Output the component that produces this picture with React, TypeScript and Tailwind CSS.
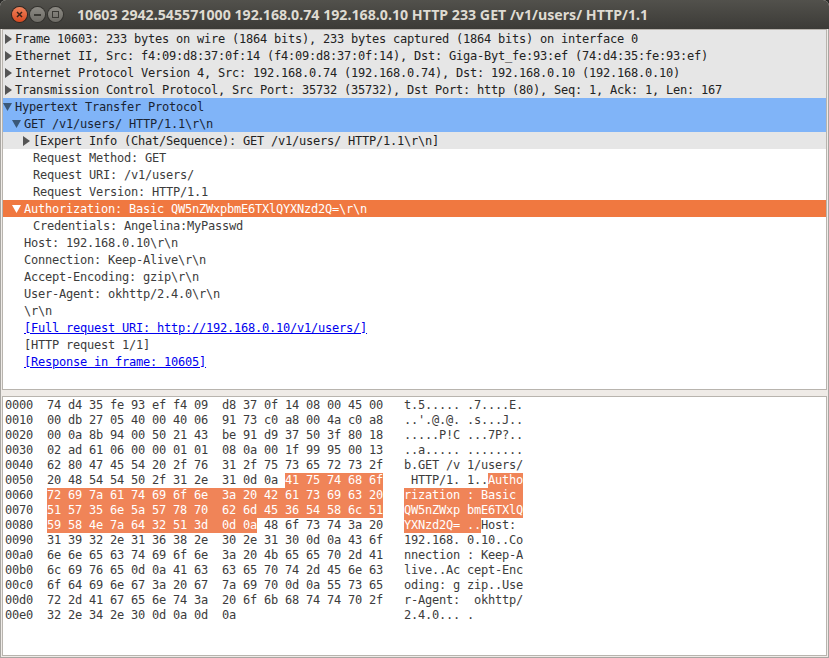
const hexRows: [string, string, string, string, string][] = [
  ["0000", "74 d4 35 fe 93 ef f4 09", "d8 37 0f 14 08 00 45 00", "t.5.....", ".7....E."],
  ["0010", "00 db 27 05 40 00 40 06", "91 73 c0 a8 00 4a c0 a8", "..'.@.@.", ".s...J.."],
  ["0020", "00 0a 8b 94 00 50 21 43", "be 91 d9 37 50 3f 80 18", ".....P!C", "...7P?.."],
  ["0030", "02 ad 61 06 00 00 01 01", "08 0a 00 1f 99 95 00 13", "..a.....", "........"],
  ["0040", "62 80 47 45 54 20 2f 76", "31 2f 75 73 65 72 73 2f", "b.GET /v", "1/users/"],
  ["0050", "20 48 54 54 50 2f 31 2e", "31 0d 0a 41 75 74 68 6f", " HTTP/1.", "1..Autho"],
  ["0060", "72 69 7a 61 74 69 6f 6e", "3a 20 42 61 73 69 63 20", "rization", ": Basic "],
  ["0070", "51 57 35 6e 5a 57 78 70", "62 6d 45 36 54 58 6c 51", "QW5nZWxp", "bmE6TXlQ"],
  ["0080", "59 58 4e 7a 64 32 51 3d", "0d 0a 48 6f 73 74 3a 20", "YXNzd2Q=", "..Host: "],
  ["0090", "31 39 32 2e 31 36 38 2e", "30 2e 31 30 0d 0a 43 6f", "192.168.", "0.10..Co"],
  ["00a0", "6e 6e 65 63 74 69 6f 6e", "3a 20 4b 65 65 70 2d 41", "nnection", ": Keep-A"],
  ["00b0", "6c 69 76 65 0d 0a 41 63", "63 65 70 74 2d 45 6e 63", "live..Ac", "cept-Enc"],
  ["00c0", "6f 64 69 6e 67 3a 20 67", "7a 69 70 0d 0a 55 73 65", "oding: g", "zip..Use"],
  ["00d0", "72 2d 41 67 65 6e 74 3a", "20 6f 6b 68 74 74 70 2f", "r-Agent:", " okhttp/"],
  ["00e0", "32 2e 34 2e 30 0d 0a 0d", "0a", "2.4.0...", "."],
];

const selected: Record<string, [number, number, number, number]> = {
  "0050": [34, 48, 12, 17],
  "0060": [0, 48, 0, 17],
  "0070": [0, 48, 0, 17],
  "0080": [0, 30, 0, 11],
};

function Hl({ text, from, to }: { text: string; from: number; to: number }) {
  return (
    <>
      {text.slice(0, from)}
      <span className="inline-block h-[15px] align-top bg-[#f08458] text-white">{text.slice(from, to)}</span>
      {text.slice(to)}
    </>
  );
}

function Arrow({ open, x, color }: { open: boolean; x: number; color: string }) {
  return open ? (
    <svg width="9" height="8" viewBox="0 0 9 8" className="shrink-0" style={{ marginLeft: x }}>
      <path d="M0 0 H9 L4.5 8 Z" fill={color} />
    </svg>
  ) : (
    <svg width="7" height="10" viewBox="0 0 7 10" className="shrink-0" style={{ marginLeft: x + 2 }}>
      <path d="M0 0 V10 L7 5 Z" fill={color} />
    </svg>
  );
}

type Row = { t: string; indent: number; arrow?: "open" | "closed"; tone?: "gray" | "blue" | "orange" | "link" };

const rows: Row[] = [
  { t: "Frame 10603: 233 bytes on wire (1864 bits), 233 bytes captured (1864 bits) on interface 0", indent: 15, arrow: "closed", tone: "gray" },
  { t: "Ethernet II, Src: f4:09:d8:37:0f:14 (f4:09:d8:37:0f:14), Dst: Giga-Byt_fe:93:ef (74:d4:35:fe:93:ef)", indent: 15, arrow: "closed", tone: "gray" },
  { t: "Internet Protocol Version 4, Src: 192.168.0.74 (192.168.0.74), Dst: 192.168.0.10 (192.168.0.10)", indent: 15, arrow: "closed", tone: "gray" },
  { t: "Transmission Control Protocol, Src Port: 35732 (35732), Dst Port: http (80), Seq: 1, Ack: 1, Len: 167", indent: 15, arrow: "closed", tone: "gray" },
  { t: "Hypertext Transfer Protocol", indent: 15, arrow: "open", tone: "blue" },
  { t: "GET /v1/users/ HTTP/1.1\\r\\n", indent: 24, arrow: "open", tone: "blue" },
  { t: "[Expert Info (Chat/Sequence): GET /v1/users/ HTTP/1.1\\r\\n]", indent: 33, arrow: "closed", tone: "gray" },
  { t: "Request Method: GET", indent: 33 },
  { t: "Request URI: /v1/users/", indent: 33 },
  { t: "Request Version: HTTP/1.1", indent: 33 },
  { t: "Authorization: Basic QW5nZWxpbmE6TXlQYXNzd2Q=\\r\\n", indent: 24, arrow: "open", tone: "orange" },
  { t: "Credentials: Angelina:MyPasswd", indent: 33 },
  { t: "Host: 192.168.0.10\\r\\n", indent: 24 },
  { t: "Connection: Keep-Alive\\r\\n", indent: 24 },
  { t: "Accept-Encoding: gzip\\r\\n", indent: 24 },
  { t: "User-Agent: okhttp/2.4.0\\r\\n", indent: 24 },
  { t: "\\r\\n", indent: 24 },
  { t: "[Full request URI: http://192.168.0.10/v1/users/]", indent: 24, tone: "link" },
  { t: "[HTTP request 1/1]", indent: 24 },
  { t: "[Response in frame: 10605]", indent: 24, tone: "link" },
];

const toneClass: Record<string, string> = {
  gray: "bg-[#e6e6e6] text-[#222222]",
  blue: "bg-[#80b4f8] text-[#1a2433]",
  orange: "bg-[#f07840] text-white",
  link: "",
};

const arrowColor: Record<string, string> = {
  gray: "#555555",
  blue: "#3a5878",
  orange: "#ffffff",
};

export default function App() {
  return (
    <div className="w-[829px] h-[658px] overflow-hidden bg-[#2a2a28] font-['DejaVu_Sans_Mono','Liberation_Mono',monospace] text-[12px] tracking-[-0.224px] text-[#3c3c3c]">
      <div className="h-full flex flex-col rounded-t-[6px] bg-[#efebe7] overflow-hidden">
        <div className="h-[29px] shrink-0 flex items-center bg-gradient-to-b from-[#52514c] to-[#3c3b37] tracking-normal">
          <div className="flex items-center gap-[3px] ml-[12px]">
            <span className="w-[15px] h-[15px] rounded-full bg-gradient-to-b from-[#f0825a] to-[#d9481e] flex items-center justify-center ring-1 ring-[#33261f]">
              <svg width="7" height="7" viewBox="0 0 7 7"><path d="M1 1 L6 6 M6 1 L1 6" stroke="#3a2218" strokeWidth="1.5" /></svg>
            </span>
            <span className="w-[15px] h-[15px] rounded-full bg-gradient-to-b from-[#8c8a84] to-[#6e6c66] flex items-center justify-center ring-1 ring-[#33322e]">
              <span className="w-[7px] h-[2px] bg-[#3a3934]" />
            </span>
            <span className="w-[15px] h-[15px] rounded-full bg-gradient-to-b from-[#8c8a84] to-[#6e6c66] flex items-center justify-center ring-1 ring-[#33322e]">
              <span className="w-[7px] h-[7px] border border-[#3a3934]" />
            </span>
          </div>
          <span className="ml-[14px] font-['Noto_Sans','Open_Sans',sans-serif] font-bold text-[14.2px] text-[#dfdbd2] whitespace-nowrap">
            10603 2942.545571000 192.168.0.74 192.168.0.10 HTTP 233 GET /v1/users/ HTTP/1.1
          </span>
        </div>

        <div className="flex-1 min-h-0 flex flex-col border-x border-b border-[#a8a6a2] pb-px">
          <div className="mx-px h-[361px] shrink-0 border border-[#b8b4ae] bg-white overflow-hidden">
            {rows.map((r) => (
              <div key={r.t} className={`h-[17px] flex items-center whitespace-pre ${r.tone ? toneClass[r.tone] : ""}`}>
                <div className="shrink-0 flex items-center" style={{ width: r.indent - 3 }}>
                  {r.arrow ? <Arrow open={r.arrow === "open"} x={r.indent - 15} color={arrowColor[r.tone ?? "gray"]} /> : null}
                </div>
                <span className={r.tone === "link" ? "text-[#0000ee] underline" : ""}>{r.t}</span>
              </div>
            ))}
          </div>

          <div className="h-[6px] shrink-0" />

          <div className="mx-px flex-1 min-h-0 border border-[#b8b4ae] bg-white pl-[2px] pt-px overflow-hidden">
            {hexRows.map(([off, h1, h2, a1, a2]) => {
              const h = `${h1}  ${h2}`;
              const a = `${a1} ${a2}`;
              const s = selected[off];
              return (
                <div key={off} className="h-[15px] leading-[15px] whitespace-pre">
                  {off}  {s ? <Hl text={h} from={s[0]} to={s[1]} /> : h}
                  {" ".repeat(48 - h.length)}   {s ? <Hl text={a} from={s[2]} to={s[3]} /> : a}
                </div>
              );
            })}
          </div>
        </div>
      </div>
    </div>
  );
}
